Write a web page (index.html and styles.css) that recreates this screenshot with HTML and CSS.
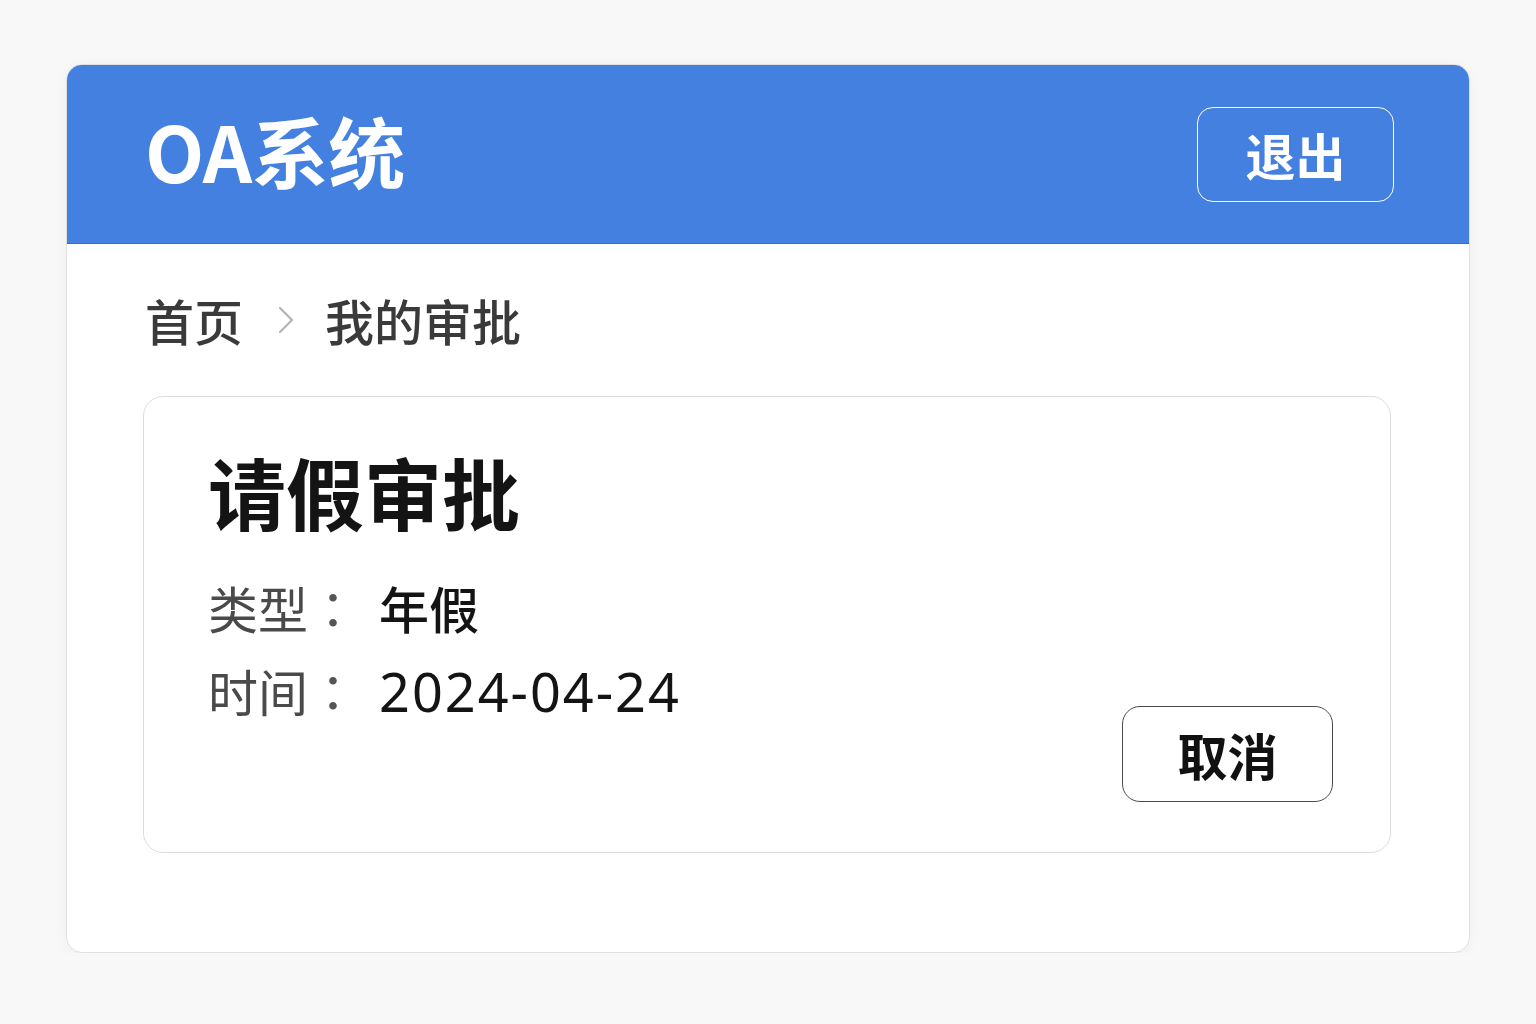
FILE: index.html
```html
<!DOCTYPE html>
<html lang="zh-CN">
<head>
<meta charset="utf-8">
<title>OA系统</title>
<link rel="stylesheet" href="styles.css">
</head>
<body>
<div class="app">
  <header class="topbar">
    <div class="brand">OA系统</div>
    <button class="logout">退出</button>
  </header>
  <nav class="crumbs">
    <span class="crumb">首页</span>
    <svg class="chev" width="18" height="30" viewBox="0 0 18 30"><path d="M3 3 L15 15 L3 27" fill="none" stroke="#b3b3b3" stroke-width="2.2" stroke-linecap="round" stroke-linejoin="round"/></svg>
    <span class="crumb">我的审批</span>
  </nav>
  <section class="card">
    <div class="info">
      <h1 class="title">请假审批</h1>
      <div class="row"><span class="label">类型<span class="colon" lang="zh-TW">：</span></span><span class="value">年假</span></div>
      <div class="row"><span class="label">时间<span class="colon" lang="zh-TW">：</span></span><span class="value date">2024-04-24</span></div>
    </div>
    <button class="cancel">取消</button>
  </section>
</div>
</body>
</html>
```
FILE: styles.css
```css
* { box-sizing: border-box; }
html, body { margin: 0; }
body {
  background: #f8f8f8;
  padding: 64px 66px 0 66px;
  font-family: "Noto Sans CJK SC", "Noto Sans", sans-serif;
}
.app {
  width: 1404px;
  height: 889px;
  background: #fff;
  border: 1px solid #e0e0e0;
  border-radius: 16px;
  overflow: hidden;
  box-shadow: 0 2px 14px rgba(0,0,0,0.04);
}
.topbar {
  height: 179px;
  background: #4380e0;
  border-bottom: 1px solid #2f6bd0;
  display: flex;
  align-items: center;
  justify-content: space-between;
  padding: 0 75px 0 78px;
}
.brand {
  color: #fff;
  font-size: 77px;
  font-weight: 700;
  line-height: 1;
  letter-spacing: -0.5px;
  margin-top: -10px;
}
.logout {
  width: 197px;
  height: 95px;
  background: transparent;
  border: 1.5px solid #fff;
  border-radius: 16px;
  color: #fff;
  font-family: inherit;
  font-size: 50px;
  font-weight: 700;
  line-height: 1;
  padding: 0;
}
.crumbs {
  display: flex;
  align-items: center;
  padding: 44px 0 0 78px;
  height: 108px;
  line-height: 60px;
}
.crumb {
  font-size: 49px;
  font-weight: 500;
  color: #3a3a3a;
}
.chev { margin: 0 30px 0 34px; }
.card {
  margin: 44px 0 0 76px;
  width: 1248px;
  height: 457px;
  border: 1px solid #dcdcdc;
  border-radius: 20px;
  display: flex;
  justify-content: space-between;
  padding: 47px 57px 50px 64px;
}
.title {
  margin: 0 0 28px;
  font-size: 78px;
  font-weight: 700;
  line-height: 94px;
  color: #141414;
}
.row {
  display: flex;
  align-items: baseline;
  font-size: 50px;
  line-height: 83px;
}
.label {
  color: #4a4a4a;
  width: 171px;
}
.colon {
  font-family: "Noto Sans CJK TC", "Noto Sans CJK SC", sans-serif;
  color: #555;
}
.value {
  color: #141414;
  font-weight: 500;
}
.date {
  font-family: "Noto Sans", "Noto Sans CJK SC", sans-serif;
  font-weight: 400;
  font-size: 54px;
  letter-spacing: 2px;
}
.cancel {
  align-self: flex-end;
  width: 211px;
  height: 96px;
  background: #fff;
  border: 1.5px solid #4a4a4a;
  border-radius: 18px;
  font-family: inherit;
  font-size: 50px;
  font-weight: 700;
  color: #111;
  padding: 0;
  line-height: 1;
}
```
